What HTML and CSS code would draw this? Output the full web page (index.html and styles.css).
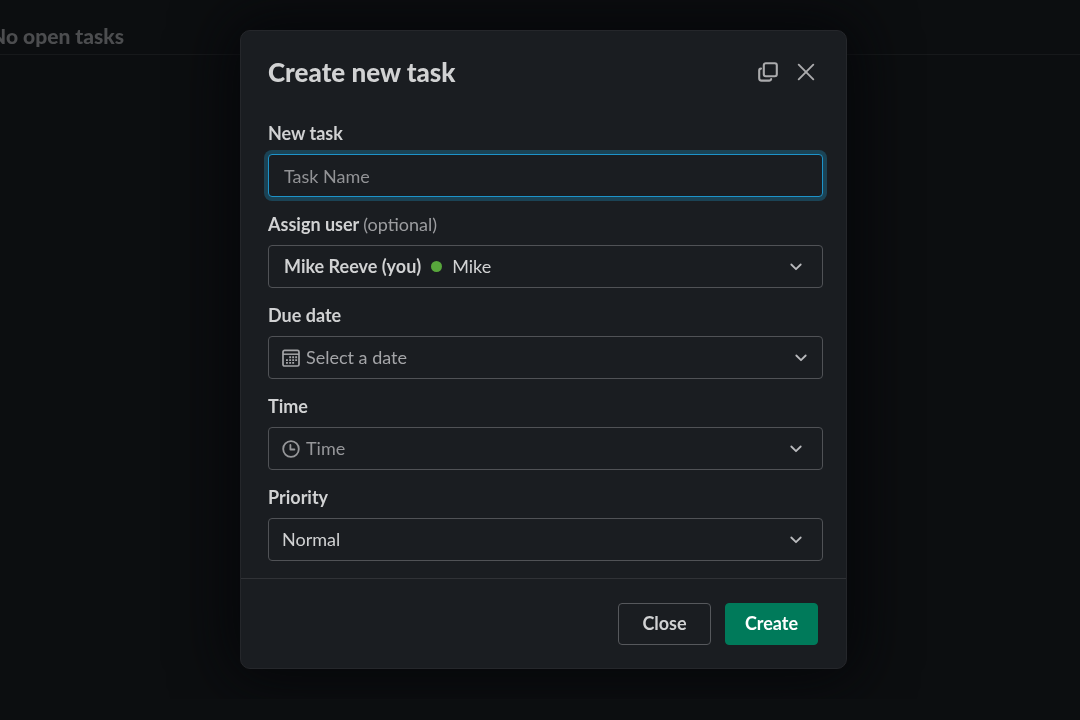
FILE: index.html
```html
<!DOCTYPE html>
<html lang="en">
<head>
<meta charset="utf-8">
<meta name="viewport" content="width=device-width, initial-scale=1">
<title>Create new task</title>
<link rel="stylesheet" href="styles.css">
</head>
<body>
<div class="page">
  <header class="page-header"><h2 class="page-title">No open tasks</h2></header>
</div>
<div class="overlay">
  <form class="dialog" role="dialog" aria-modal="true" aria-labelledby="dialog-title">
    <header class="dialog-header">
      <h1 class="dialog-title" id="dialog-title">Create new task</h1>
      <button class="icon-button" type="button" aria-label="Open in new window">
        <svg width="20" height="20" viewBox="0 0 20 20" fill="none" stroke="currentColor" stroke-width="2.1" stroke-linecap="round" stroke-linejoin="round"><rect x="5.8" y="1.2" width="13" height="13" rx="2"/><path d="M3 6.6a1.9 1.9 0 0 0-1.8 1.9v7.8a2.3 2.3 0 0 0 2.3 2.3h7.8a1.9 1.9 0 0 0 1.9-1.6"/></svg>
      </button>
      <button class="icon-button" type="button" aria-label="Close dialog">
        <svg width="18" height="18" viewBox="0 0 18 18" fill="none" stroke="currentColor" stroke-width="1.9" stroke-linecap="round"><path d="M1.7 1.7l14.6 14.6M16.3 1.7L1.7 16.3"/></svg>
      </button>
    </header>
    <div class="dialog-body">
      <div class="field">
        <label class="label" for="task">New task</label>
        <input class="control control-focus" id="task" type="text" placeholder="Task Name">
      </div>
      <div class="field">
        <label class="label" for="user">Assign user <span class="optional">(optional)</span></label>
        <button class="control picker" id="user" type="button" aria-haspopup="listbox">
          <strong class="user-name">Mike Reeve (you)</strong><span class="presence"></span><span class="picker-text">Mike</span>
          <svg class="chevron" width="12" height="8" viewBox="0 0 12 8"><path d="M1.3 1.5L6 6.2l4.7-4.7"/></svg>
        </button>
      </div>
      <div class="field">
        <label class="label" for="date">Due date</label>
        <button class="control picker picker-date" id="date" type="button" aria-haspopup="dialog">
          <svg class="lead-icon" width="18" height="18" viewBox="0 0 18 18" fill="none" stroke="currentColor"><rect x="1" y="1.4" width="16" height="15.6" rx="1.6" stroke-width="1.7"/><path d="M1 5.2h16" stroke-width="1.5"/><path d="M7.2 8.3h1.9M10.2 8.3h1.9M13.2 8.3h1.9M4 11.1h1.9M7.2 11.1h1.9M10.2 11.1h1.9M13.2 11.1h1.9M4 13.9h1.9M7.2 13.9h1.9M10.2 13.9h1.9" stroke-width="1.9"/></svg>
          <span class="picker-text">Select a date</span>
          <svg class="chevron" width="12" height="8" viewBox="0 0 12 8"><path d="M1.3 1.5L6 6.2l4.7-4.7"/></svg>
        </button>
      </div>
      <div class="field">
        <label class="label" for="time">Time</label>
        <div class="control picker picker-time">
          <svg class="lead-icon" width="18" height="18" viewBox="0 0 18 18" fill="none" stroke="currentColor" stroke-width="1.8" stroke-linecap="round" stroke-linejoin="round"><circle cx="9" cy="9" r="7.8"/><path d="M8.4 4.9v4.6h4"/></svg>
          <select class="select" id="time"><option>Time</option></select>
          <svg class="chevron" width="12" height="8" viewBox="0 0 12 8"><path d="M1.3 1.5L6 6.2l4.7-4.7"/></svg>
        </div>
      </div>
      <div class="field">
        <label class="label" for="priority">Priority</label>
        <div class="control picker picker-priority">
          <select class="select" id="priority"><option>Normal</option></select>
          <svg class="chevron" width="12" height="8" viewBox="0 0 12 8"><path d="M1.3 1.5L6 6.2l4.7-4.7"/></svg>
        </div>
      </div>
    </div>
    <footer class="dialog-footer">
      <button class="button" type="button">Close</button>
      <button class="button button-primary" type="submit">Create</button>
    </footer>
  </form>
</div>
</body>
</html>
```
FILE: styles.css
```css
*, *::before, *::after { box-sizing: border-box; }
body {
  margin: 0;
  background: #0c0e10;
  color: #d1d2d3;
  font: 18px/24px Lato, "Liberation Sans", sans-serif;
  overflow-x: hidden;
}
button, input, select { font: inherit; color: inherit; }
h1, h2 { margin: 0; }
.page { position: fixed; inset: 0; overflow: hidden; }
.page-header { padding: 24px 0 6px; border-bottom: 1px solid #17191b; }
.page-title {
  margin-left: -10px;
  color: #4c4d4f;
  font-size: 21px;
  font-weight: 900;
  line-height: 24px;
}
.overlay {
  position: relative;
  display: flex;
  justify-content: center;
  align-items: flex-start;
  padding: 30px 17px 30px 24px;
}
.dialog {
  width: 100%;
  max-width: 607px;
  border: 1px solid #25272b;
  border-radius: 10px;
  background: #1a1d21;
  box-shadow: 0 0 60px 8px #050609;
}
.dialog-header {
  display: flex;
  align-items: center;
  gap: 8px;
  padding: 25px 25px 0 27px;
}
.dialog-title {
  flex: 1;
  font-size: 26px;
  font-weight: 900;
  line-height: 32px;
}
.icon-button {
  display: grid;
  place-items: center;
  width: 30px;
  height: 32px;
  padding: 0;
  border: 0;
  background: none;
  color: #ababad;
}
.dialog-body {
  display: grid;
  gap: 15px;
  padding: 33px 23px 17px 27px;
}
.field { display: grid; gap: 9px; }
.label { font-weight: 700; }
.optional { color: #9c9da0; font-weight: 400; }
.control {
  width: 100%;
  height: 43px;
  padding: 0 15px;
  border: 1px solid #505256;
  border-radius: 4px;
  background: #1a1d21;
}
.control-focus {
  border-color: #1d93c9;
  outline: 0;
  box-shadow: 0 0 0 4px #1b4355;
}
.control-focus::placeholder { color: #929396; opacity: 1; }
.picker {
  display: flex;
  align-items: center;
  padding-right: 20px;
  text-align: left;
}
.picker-date { padding-left: 13px; padding-right: 15px; color: #a4a5a8; }
.picker-time { padding-left: 13px; color: #96979a; }
.picker-priority { padding-left: 13px; }
.picker-text { flex: 1; }
.picker-text, .user-name, .select { padding: 0 0 2px; }
.user-name { font-weight: 700; }
.presence {
  width: 11px;
  height: 11px;
  margin: 0 10px;
  border-radius: 50%;
  background: #58a63c;
}
.lead-icon { flex: none; margin-right: 6px; }
.select {
  flex: 1;
  min-width: 0;
  height: 100%;
  border: 0;
  outline: 0;
  background: none;
  appearance: none;
}
.chevron {
  flex: none;
  fill: none;
  stroke: #b9babd;
  stroke-width: 1.8;
  stroke-linecap: round;
  stroke-linejoin: round;
  pointer-events: none;
}
.dialog-footer {
  display: flex;
  justify-content: flex-end;
  gap: 14px;
  padding: 24px 28px 23px;
  border-top: 1px solid #303236;
}
.button {
  min-width: 93px;
  height: 42px;
  padding: 0 16px 2px;
  border: 1px solid #56585c;
  border-radius: 4px;
  background: #1a1d21;
  font-weight: 700;
}
.button-primary { border-color: #007a5a; background: #007a5a; color: #fff; }
```
